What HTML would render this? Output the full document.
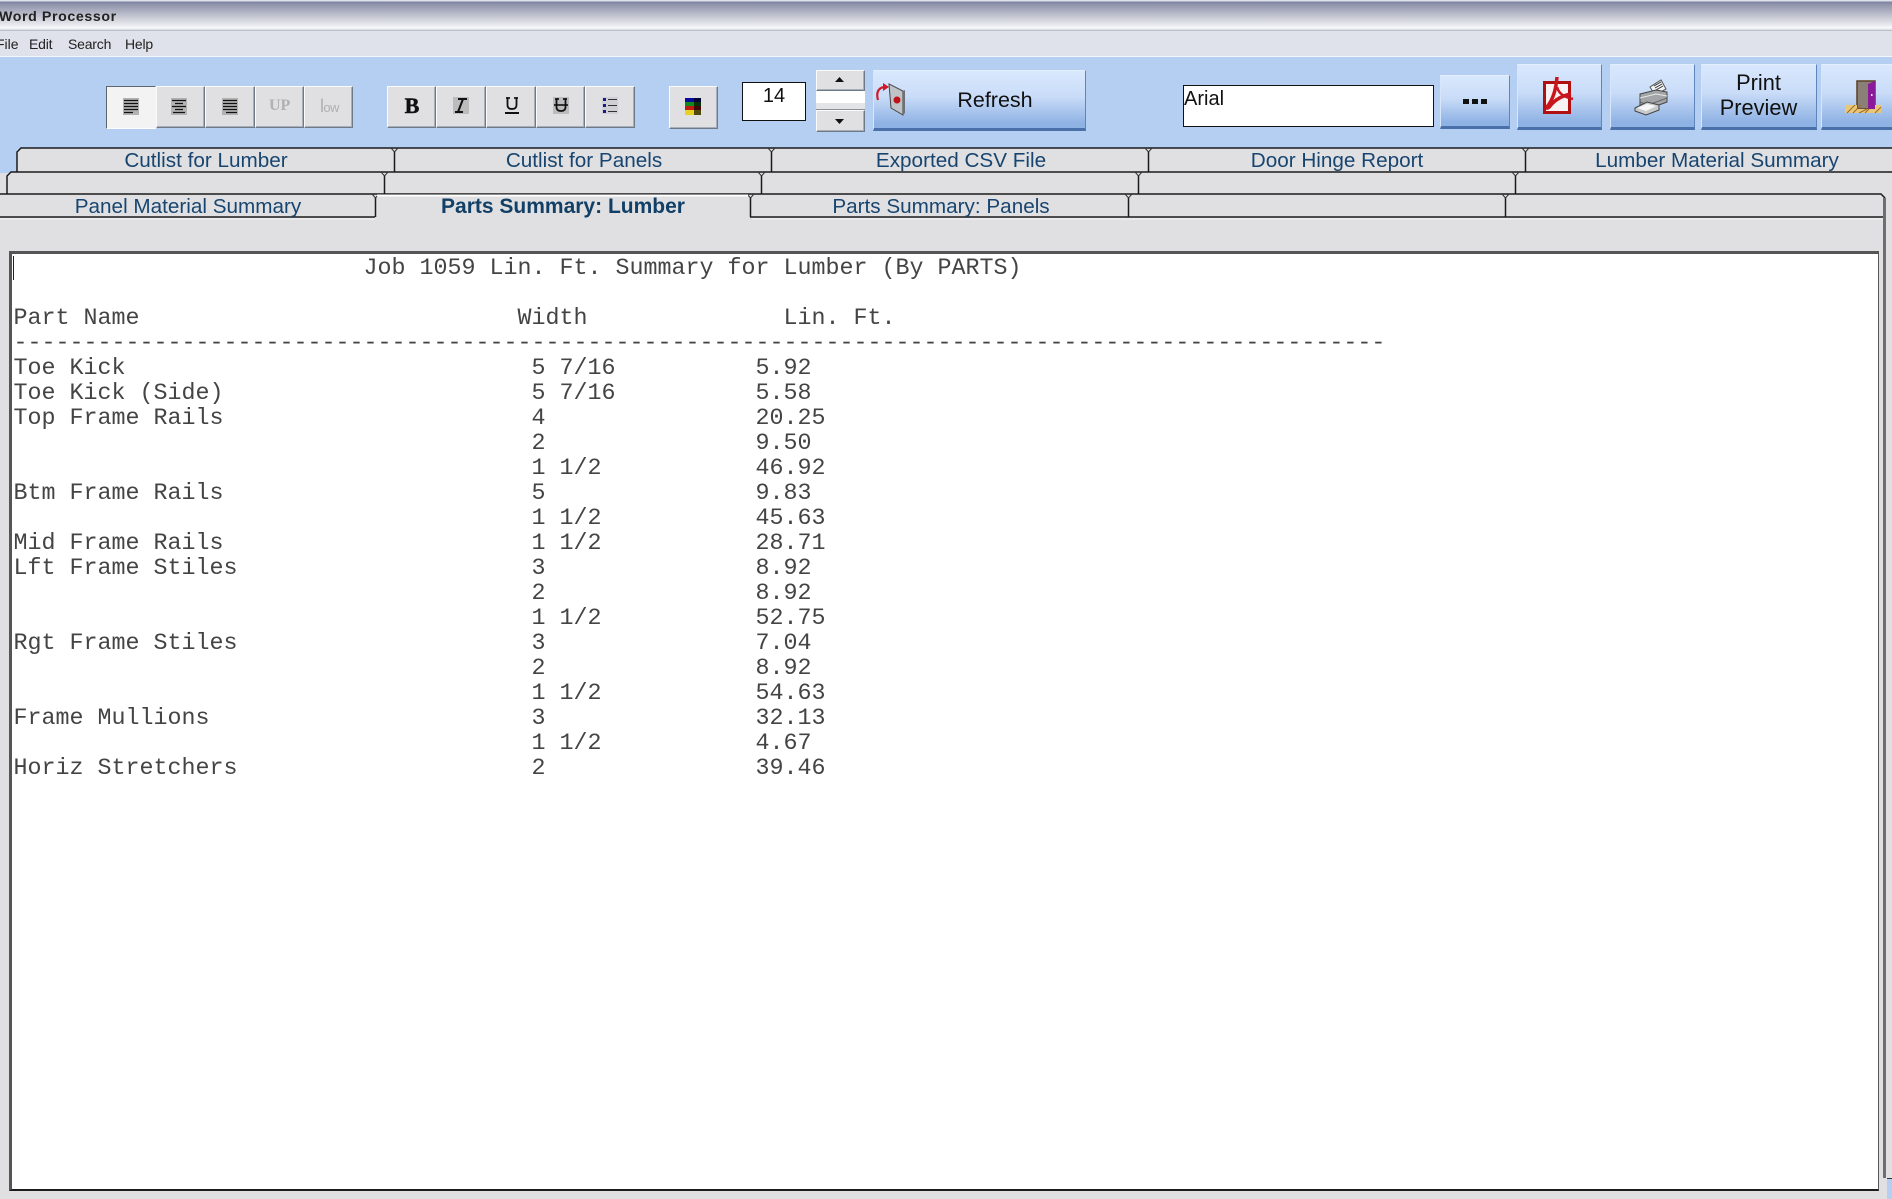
<!DOCTYPE html>
<html><head><meta charset="utf-8"><style>
html,body{margin:0;padding:0;width:1892px;height:1199px;overflow:hidden;background:#e0e0e2;font-family:"Liberation Sans",sans-serif}
.a{position:absolute}
.g{position:absolute;box-sizing:border-box;background:#e0e0e3;border:1px solid;border-color:#fbfbfb #6f7a88 #6f7a88 #fbfbfb;box-shadow:inset -1px -1px 0 #a9afb8}
.b{position:absolute;box-sizing:border-box;background:linear-gradient(#d9e8fd 0%,#c9dcf8 45%,#8fb2e4 92%);border-bottom:3px solid #4a70aa;border-right:1px solid #5f84bb;border-top:1px solid #e2eefe;border-left:1px solid #d7e6fb;text-align:center;color:#111}
.t{position:absolute;font-size:20.7px;color:#174570;line-height:23px;white-space:nowrap;transform:translateX(-50%)}
pre{position:absolute;left:13.5px;top:257px;margin:0;font:23.33px/24.98px "Liberation Mono",monospace;color:#444;white-space:pre}
svg{position:absolute;display:block}
</style></head><body>
<!-- title -->
<div class="a" style="left:0;top:0;width:1892px;height:31px;background:linear-gradient(#dfe2ea 0,#dfe2ea 1px,#7e829f 2px,#8e91aa 4px,#b9bcca 14px,#f2f3f6 27px,#fff 28px,#dfe2ea 29px,#dfe2ea 30px,#9a9ca6 31px)"></div>
<div class="a" style="left:-1px;top:8px;font-size:14.2px;font-weight:bold;letter-spacing:.6px;color:#222;line-height:18px;white-space:nowrap">Word Processor</div>
<!-- menu -->
<div class="a" style="left:0;top:31px;width:1892px;height:26px;background:#dfe2ea;border-bottom:1px solid #f4f6fb;box-sizing:border-box"></div>
<div class="a" style="left:-4px;top:35px;font-size:14px;color:#222;line-height:18px;white-space:nowrap">File</div>
<div class="a" style="left:29px;top:35px;font-size:14px;color:#222;line-height:18px;letter-spacing:-.2px">Edit</div>
<div class="a" style="left:68px;top:35px;font-size:14px;color:#222;line-height:18px;letter-spacing:-.2px">Search</div>
<div class="a" style="left:125px;top:35px;font-size:14px;color:#222;line-height:18px;letter-spacing:-.2px">Help</div>
<!-- toolbar bg -->
<div class="a" style="left:0;top:57px;width:1892px;height:92px;background:#b5cff3"></div>
<div class="a" style="left:0;top:149px;width:17px;height:24px;background:#b5cff3"></div>

<!-- align group -->
<div class="g" style="left:106px;top:86px;width:50px;height:43px;background:#f3f3f3;border-color:#5f6670 #f3f3f3 #fff #5f6670;box-shadow:none"></div>
<div class="g" style="left:156px;top:86px;width:49px;height:42px"></div>
<div class="g" style="left:205px;top:86px;width:50px;height:42px"></div>
<div class="g" style="left:255px;top:86px;width:49px;height:42px"></div>
<div class="g" style="left:304px;top:86px;width:49px;height:42px"></div>
<svg style="left:123px;top:98px" width="16" height="17"><rect width="16" height="17" fill="#b2b2b2"/><path d="M1 2.500H15M1 5.500H15M1 8.500H15M1 11.500H15M1 14.500H10" stroke="#111" stroke-width="1.200"/></svg>
<svg style="left:171px;top:98px" width="16" height="17"><rect width="16" height="17" fill="#b2b2b2"/><path d="M1 2.500H15M4 5.500H12M1 8.500H15M4 11.500H12M2 14.500H14" stroke="#111" stroke-width="1.200"/></svg>
<svg style="left:222px;top:98px" width="16" height="17"><rect width="16" height="17" fill="#b2b2b2"/><path d="M1 2.500H15M1 5.500H15M1 8.500H15M1 11.500H15M4 14.500H15" stroke="#111" stroke-width="1.200"/></svg>
<div class="a" style="left:269px;top:96px;width:20px;text-align:center;font:bold 16px/20px 'Liberation Serif',serif;color:#b0b0b0">UP</div>
<div class="a" style="left:320px;top:98px;font:13px/20px 'Liberation Sans',sans-serif;color:#b0b0b0;letter-spacing:-.6px"><span style="font-size:18px;line-height:14px">l</span>ow</div>

<!-- format group -->
<div class="g" style="left:387px;top:86px;width:49px;height:42px"></div>
<div class="g" style="left:436px;top:86px;width:50px;height:42px"></div>
<div class="g" style="left:486px;top:86px;width:50px;height:42px"></div>
<div class="g" style="left:536px;top:86px;width:49px;height:42px"></div>
<div class="g" style="left:585px;top:86px;width:50px;height:42px"></div>
<div class="a" style="left:402px;top:94px;width:20px;text-align:center;font:bold 22px/24px 'Liberation Serif',serif;color:#111;-webkit-text-stroke:.5px #111">B</div>
<svg style="left:453px;top:97px" width="16" height="17"><rect width="16" height="17" fill="#bcbcbc"/><path d="M5 2H14M2 15H10M10 2L5 15" stroke="#111" stroke-width="2" fill="none"/></svg>
<svg style="left:504px;top:97px" width="16" height="18"><path d="M2 1H6M10 1H14M3.500 1V8Q3.500 12 8 12T12.500 8V1" stroke="#111" stroke-width="1.800" fill="none"/><path d="M1 16H15" stroke="#111" stroke-width="2"/></svg>
<svg style="left:553px;top:97px" width="16" height="17"><rect width="16" height="17" fill="#bcbcbc"/><path d="M2 2H6M10 2H14M3.500 2V10Q3.500 14 8 14T12.500 10V2" stroke="#111" stroke-width="1.800" fill="none"/><path d="M1 8H15" stroke="#111" stroke-width="1.600"/></svg>
<svg style="left:602px;top:97px" width="16" height="17"><rect x="0" y="0" width="16" height="17" fill="#d0d0d4"/><path d="M6 2.500H15M6 8.500H15M6 14.500H15" stroke="#333" stroke-width="1"/><path d="M1 1H4V4H1ZM1 7H4V10H1ZM1 13H4V16H1Z" fill="#1a1a8c"/></svg>

<!-- colour -->
<div class="g" style="left:669px;top:86px;width:49px;height:43px"></div>
<svg style="left:685px;top:98px" width="16" height="17"><rect width="16" height="4" fill="#0a0a9a"/><rect y="4" width="16" height="4" fill="#0f8a1a"/><rect y="8" width="16" height="4" fill="#c01a10"/><rect y="12" width="16" height="5" fill="#e8d020"/><path d="M9 0h7v17H9z" fill="#000" opacity=".65"/></svg>

<!-- size -->
<div class="a" style="left:742px;top:82px;width:64px;height:39px;box-sizing:border-box;background:#fff;border:1px solid #111;text-align:center;font-size:20px;line-height:26px;color:#111">14</div>
<div class="g" style="left:816px;top:70px;width:49px;height:21px"></div>
<div class="a" style="left:816px;top:91px;width:49px;height:12px;background:#fff"></div>
<div class="a" style="left:816px;top:103px;width:49px;height:7px;background:#e4e4e6;border-bottom:1px solid #8a8f98;box-sizing:border-box"></div>
<div class="g" style="left:816px;top:110px;width:49px;height:22px"></div>
<svg style="left:834px;top:76px" width="11" height="7"><path d="M5.500 1L10 6H1Z" fill="#111"/></svg>
<svg style="left:834px;top:118px" width="11" height="7"><path d="M5.500 6L10 1H1Z" fill="#111"/></svg>

<!-- refresh -->
<div class="b" style="left:873px;top:70px;width:213px;height:61px"></div>
<svg style="left:873px;top:78px" width="36" height="46"><path d="M5 22C3 15 5 10 11 9" stroke="#d01a2a" stroke-width="2.200" fill="none"/><path d="M10 5L16 9L10 13Z" fill="#d01a2a"/><path d="M16 6L30 13V37L18 30Z" fill="#bfc2c6" stroke="#444" stroke-width="1"/><path d="M30 13L32 12V35L30 37Z" fill="#6d7075"/><circle cx="24" cy="22" r="3.500" fill="#c01018"/></svg>
<div class="a" style="left:940px;top:87px;width:110px;text-align:center;font-size:21.500px;line-height:26px;color:#111">Refresh</div>

<!-- font -->
<div class="a" style="left:1183px;top:85px;width:251px;height:42px;box-sizing:border-box;background:#fff;border:1px solid #111;font-size:20px;line-height:26px;color:#111;padding-left:0">Arial</div>
<div class="b" style="left:1440px;top:75px;width:70px;height:54px"></div>
<svg style="left:1463px;top:98px" width="24" height="7"><path d="M0 1h6v5H0zM9 1h6v5H9zM18 1h6v5h-6z" fill="#111"/></svg>

<!-- pdf -->
<div class="b" style="left:1517px;top:64px;width:85px;height:66px"></div>
<svg style="left:1540px;top:76px" width="36" height="44"><rect x="4.500" y="6.500" width="25" height="30" fill="#f8f2f2" stroke="#b01010" stroke-width="3"/><path d="M17 1C16 12 14 22 7 31C6 33 9 32 10 30C14 25 20 20 31 18" stroke="#c8161c" stroke-width="3.500" fill="none"/><path d="M17 11C19 18 24 21 33 23" stroke="#c8161c" stroke-width="2.500" fill="none"/></svg>

<!-- printer -->
<div class="b" style="left:1610px;top:64px;width:85px;height:66px"></div>
<svg style="left:1634px;top:78px" width="38" height="38"><path d="M16 9L27 2L32 11L21 17Z" fill="#f2f4f6" stroke="#555"/><path d="M20 8L27 4M21 10L28 6M22 12L29 8" stroke="#333"/><path d="M6 16L22 12L33 14V24L14 31L6 27Z" fill="#a2a5a7" stroke="#444"/><path d="M6 20L22 16L33 18" stroke="#e8e8e8" fill="none"/><path d="M6 24L14 27L33 20" stroke="#666" fill="none"/><path d="M1 30L13 24L25 27V32L12 37L1 33Z" fill="#c8cacc" stroke="#444"/><path d="M3 30L13 26L22 28L12 33Z" fill="#f6f6f6"/></svg>

<!-- print preview -->
<div class="b" style="left:1701px;top:64px;width:116px;height:66px"></div>
<div class="a" style="left:1701px;top:70px;width:115px;text-align:center;font-size:21.800px;line-height:25px;color:#111">Print<br>Preview</div>

<!-- exit -->
<div class="b" style="left:1821px;top:64px;width:71px;height:66px;border-right:0"></div>
<svg style="left:1845px;top:79px" width="36" height="36"><path d="M12 2H30V30H12Z" fill="#8a8078" stroke="#5a4020" stroke-width="1.500"/><path d="M23 5L30 2V34L23 30Z" fill="#8a1a9a"/><rect x="26" y="15" width="1.500" height="2" fill="#eee"/><path d="M0 26H12V30H30V26H36V34H0Z" fill="#e8c878"/><path d="M2 34L10 26M8 34L16 26M14 34L22 30M20 34L24 30M30 34L36 28" stroke="#a06a20"/></svg>

<!-- tabs -->
<svg style="left:0;top:145px" width="1892" height="85">
<path d="M17 27V7L21 3H1892V27H1892L1892 52H1892V85H0V49H7V31L11 27Z" fill="#e0e0e2"/>
<g fill="none" stroke="#1a1a1a" stroke-width="1.500">
<path d="M17 27V7L21 3H1892"/>
<path d="M7 49V31L11 27H1892"/>
<path d="M0 49H1881L1885 53"/>
<path d="M394.500 6V27M771.500 6V27M1148.500 6V27M1525.500 6V27"/>
<path d="M384.500 30V49M761.500 30V49M1138.500 30V49M1515.500 30V49"/>
<path d="M375.500 52V72M750.500 52V72M1128.500 52V72M1505.500 52V72"/>
<path d="M0 72H375M750 72H1885"/>
</g>
<g fill="none" stroke="#333" stroke-width="1">
<path d="M391 3L394.500 7L398 3M768 3L771.500 7L775 3M1145 3L1148.500 7L1152 3M1522 3L1525.500 7L1529 3"/>
<path d="M381 27L384.500 31L388 27M758 27L761.500 31L765 27M1135 27L1138.500 31L1142 27M1512 27L1515.500 31L1519 27"/>
<path d="M372 49L375.500 53L379 49M747 49L750.500 53L754 49M1125 49L1128.500 53L1132 49M1502 49L1505.500 53L1509 49"/>
</g>
<path d="M377 50.500H748" stroke="#fff" stroke-width="2"/>
<path d="M377 73.500H748" stroke="#e0e0e2" stroke-width="3"/>
<path d="M0 74H375M752 74H1884" stroke="#f4f4f6" stroke-width="1"/>
</svg>
<div class="t" style="left:206px;top:149px">Cutlist for Lumber</div>
<div class="t" style="left:584px;top:149px">Cutlist for Panels</div>
<div class="t" style="left:961px;top:149px">Exported CSV File</div>
<div class="t" style="left:1337px;top:149px">Door Hinge Report</div>
<div class="t" style="left:1717px;top:149px">Lumber Material Summary</div>
<div class="t" style="left:188px;top:195px">Panel Material Summary</div>
<div class="t" style="left:563px;top:195px;font-weight:bold;color:#123f66;font-size:21px">Parts Summary: Lumber</div>
<div class="t" style="left:941px;top:195px">Parts Summary: Panels</div>

<!-- panel edge -->
<div class="a" style="left:1883px;top:198px;width:3px;height:980px;background:#6e6e72"></div>
<div class="a" style="left:1887px;top:1178px;width:5px;height:21px;background:#b5cff3;border-top:1px solid #333;box-sizing:border-box"></div>

<!-- text area -->
<div class="a" style="left:9px;top:251px;width:1870px;height:940px;box-sizing:border-box;background:#fff;border:2px solid #1c1c1c;border-left:3px solid #555;border-top:3px solid #555;border-right:1px solid #555"></div>
<div class="a" style="left:13px;top:256px;width:1px;height:24px;background:#222"></div>
<pre>                         Job 1059 Lin. Ft. Summary for Lumber (By PARTS)

Part Name                           Width              Lin. Ft.
--------------------------------------------------------------------------------------------------
Toe Kick                             5 7/16          5.92
Toe Kick (Side)                      5 7/16          5.58
Top Frame Rails                      4               20.25
                                     2               9.50
                                     1 1/2           46.92
Btm Frame Rails                      5               9.83
                                     1 1/2           45.63
Mid Frame Rails                      1 1/2           28.71
Lft Frame Stiles                     3               8.92
                                     2               8.92
                                     1 1/2           52.75
Rgt Frame Stiles                     3               7.04
                                     2               8.92
                                     1 1/2           54.63
Frame Mullions                       3               32.13
                                     1 1/2           4.67
Horiz Stretchers                     2               39.46</pre>
</body></html>
